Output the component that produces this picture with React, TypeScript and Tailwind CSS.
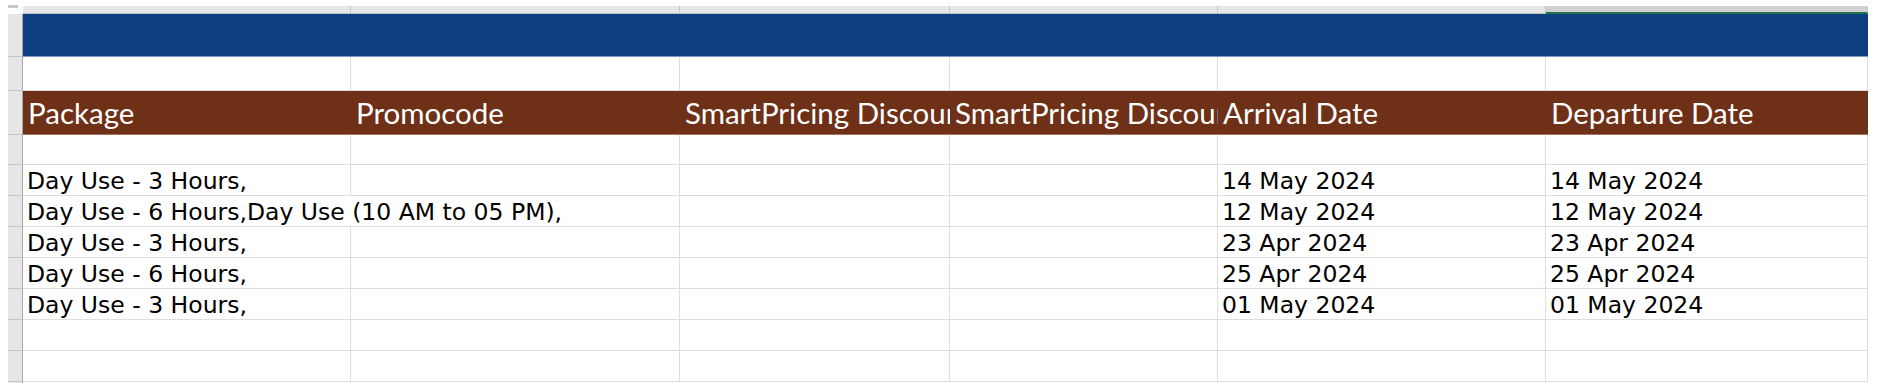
const colWidths = [328, 329, 270, 268, 328, 322]
const colLetters = ['A', 'B', 'C', 'D', 'E', 'F']

const headers = ['Package', 'Promocode', 'SmartPricing Discount', 'SmartPricing Discount', 'Arrival Date', 'Departure Date']

const rows = [
  ['Day Use - 3 Hours,', '', '', '', '14 May 2024', '14 May 2024'],
  ['Day Use - 6 Hours,Day Use (10 AM to 05 PM),', '', '', '', '12 May 2024', '12 May 2024'],
  ['Day Use - 3 Hours,', '', '', '', '23 Apr 2024', '23 Apr 2024'],
  ['Day Use - 6 Hours,', '', '', '', '25 Apr 2024', '25 Apr 2024'],
  ['Day Use - 3 Hours,', '', '', '', '01 May 2024', '01 May 2024'],
]

// heights of each sheet row incl. bottom border
const rowHeights = [43, 34, 44, 30, 31, 31, 31, 31, 31, 31, 31]

function EmptyRow({ h }: { h: number }) {
  return (
    <div className="flex border-b border-[#dedede]" style={{ height: h }}>
      {colWidths.map((w, i) => (
        <div key={i} className="shrink-0 border-r border-[#dedede]" style={{ width: w }} />
      ))}
    </div>
  )
}

export default function App() {
  return (
    <div className="w-[1878px] h-[383px] bg-white overflow-hidden flex" style={{ fontFamily: '"DejaVu Sans", sans-serif' }}>
      <div className="w-[8px] shrink-0" />

      {/* Row headers */}
      <div className="w-[15px] shrink-0 flex flex-col">
        <div className="h-[14px] flex items-start pt-[5px]">
          <div className="w-[10px] h-[3px] bg-[#c8c8c8]" />
        </div>
        {rowHeights.map((h, i) => (
          <div key={i} className="shrink-0 bg-[#e6e6e6] border-r border-r-[#a6a6a6] border-b border-b-[#c6c6c6]" style={{ height: h }} />
        ))}
        <div className="flex-1 bg-[#e6e6e6] border-r border-r-[#a6a6a6]" />
      </div>

      {/* Sheet */}
      <div className="w-[1845px] shrink-0 flex flex-col">
        {/* Column letters (cut off at top) */}
        <div className="h-[14px] flex flex-col">
          <div className="h-[6px]" />
          <div className="h-[8px] flex">
            {colWidths.map((w, i) => (
              <div
                key={i}
                className={`shrink-0 overflow-hidden flex justify-center border-r border-[#c6c6c6] ${i === 5 ? 'bg-[#d2d2d2] border-b-2 border-b-[#217346]' : 'bg-[#e6e6e6] border-b border-b-[#bdbdbd]'}`}
                style={{ width: w }}
              >
                <span className="text-[18px] leading-[18px] mt-[-15px] text-[#222]" style={{ fontFamily: '"Liberation Sans", sans-serif' }}>
                  {colLetters[i]}
                </span>
              </div>
            ))}
          </div>
        </div>

        {/* Title band */}
        <div className="h-[43px] bg-[#0e3f81] border-b border-[#7b97c4]" />

        <EmptyRow h={34} />

        {/* Header row */}
        <div className="h-[44px] flex bg-[#6e3016] border-b border-[#a8725e]">
          {headers.map((t, i) => (
            <div
              key={i}
              className="shrink-0 overflow-hidden whitespace-nowrap flex items-end pl-[5px] pb-[3px] text-white text-[29.5px] leading-[36px]"
              style={{ width: colWidths[i], fontFamily: 'Lato, "Open Sans", sans-serif' }}
            >
              {t}
            </div>
          ))}
        </div>

        <EmptyRow h={30} />

        {rows.map((r, ri) => (
          <div key={ri} className="h-[31px] flex border-b border-[#dedede]">
            {r.map((c, ci) => (
              <div
                key={ci}
                className={`shrink-0 whitespace-nowrap flex items-end pl-[4px] text-black text-[23.5px] leading-[28px] ${ci === 0 ? 'overflow-visible relative z-10' : 'overflow-hidden'} ${ci === 0 && ri === 1 ? '' : 'border-r border-[#dedede]'}`}
                style={{ width: colWidths[ci] }}
              >
                {c}
              </div>
            ))}
          </div>
        ))}

        <EmptyRow h={31} />
        <EmptyRow h={31} />
      </div>
    </div>
  )
}
